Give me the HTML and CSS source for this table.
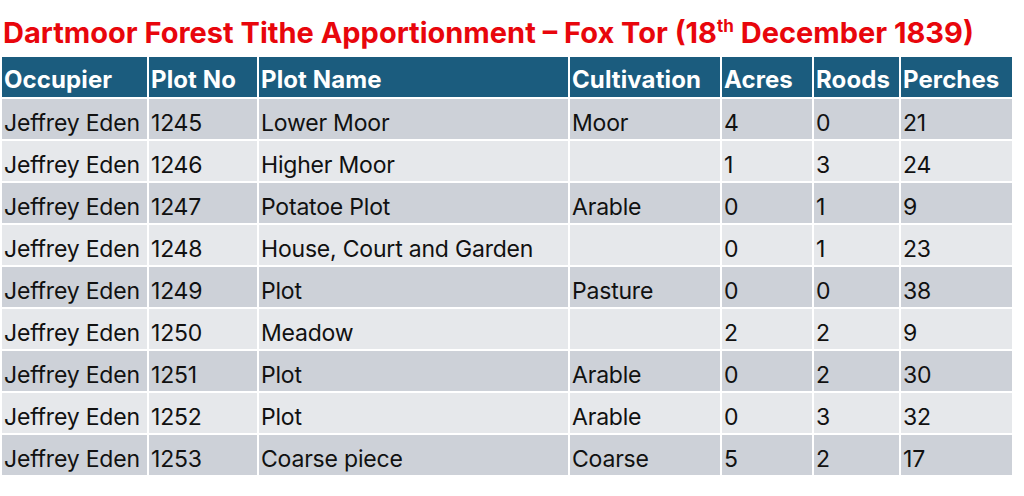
FILE: index.html
```html
<!DOCTYPE html>
<html>
<head>
<meta charset="utf-8">
<link rel="stylesheet" href="styles.css">
</head>
<body>
<h1 class="title">Dartmoor Forest Tithe Apportionment – Fox Tor (18<sup>th</sup> December 1839)</h1>
<table class="tithe">
<colgroup>
<col class="c1"><col class="c2"><col class="c3"><col class="c4"><col class="c5"><col class="c6"><col class="c7">
</colgroup>
<thead>
<tr><th>Occupier</th><th>Plot No</th><th>Plot Name</th><th>Cultivation</th><th>Acres</th><th>Roods</th><th>Perches</th></tr>
</thead>
<tbody>
<tr><td>Jeffrey Eden</td><td>1245</td><td>Lower Moor</td><td>Moor</td><td>4</td><td>0</td><td>21</td></tr>
<tr><td>Jeffrey Eden</td><td>1246</td><td>Higher Moor</td><td></td><td>1</td><td>3</td><td>24</td></tr>
<tr><td>Jeffrey Eden</td><td>1247</td><td>Potatoe Plot</td><td>Arable</td><td>0</td><td>1</td><td>9</td></tr>
<tr><td>Jeffrey Eden</td><td>1248</td><td>House, Court and Garden</td><td></td><td>0</td><td>1</td><td>23</td></tr>
<tr><td>Jeffrey Eden</td><td>1249</td><td>Plot</td><td>Pasture</td><td>0</td><td>0</td><td>38</td></tr>
<tr><td>Jeffrey Eden</td><td>1250</td><td>Meadow</td><td></td><td>2</td><td>2</td><td>9</td></tr>
<tr><td>Jeffrey Eden</td><td>1251</td><td>Plot</td><td>Arable</td><td>0</td><td>2</td><td>30</td></tr>
<tr><td>Jeffrey Eden</td><td>1252</td><td>Plot</td><td>Arable</td><td>0</td><td>3</td><td>32</td></tr>
<tr><td>Jeffrey Eden</td><td>1253</td><td>Coarse piece</td><td>Coarse</td><td>5</td><td>2</td><td>17</td></tr>
</tbody>
</table>
</body>
</html>
```
FILE: styles.css
```css
html, body {
  margin: 0;
  padding: 0;
  background: #ffffff;
}
body {
  font-family: Inter, "Liberation Sans", sans-serif;
}
.title {
  margin: 0;
  padding: 16px 0 0 3px;
  height: 38px;
  font-size: 29px;
  font-weight: 700;
  color: #e8060c;
  line-height: 34px;
  letter-spacing: 0;
  white-space: nowrap;
}
.title sup {
  font-size: 17px;
  line-height: 0;
  vertical-align: 11px;
}
.tithe {
  border-collapse: separate;
  border-spacing: 2px;
  table-layout: fixed;
  width: 1014px;
  margin-top: 1px;
}
.c1 { width: 145px; }
.c2 { width: 108px; }
.c3 { width: 309px; }
.c4 { width: 150px; }
.c5 { width: 90px; }
.c6 { width: 85px; }
.c7 { width: 111px; }
.tithe th, .tithe td {
  height: 33px;
  padding: 7px 0 0 2px;
  vertical-align: middle;
  text-align: left;
  white-space: nowrap;
  overflow: hidden;
  line-height: 28px;
}
.tithe th {
  background: #1b5c7e;
  color: #ffffff;
  font-weight: 700;
  font-size: 24px;
  letter-spacing: 0.1px;
  padding-top: 6px;
  height: 34px;
}
.tithe td {
  color: #111111;
  font-weight: 400;
  font-size: 23px;
  letter-spacing: -0.2px;
}
.tithe tbody tr:nth-child(odd) td { background: #cdd1d8; }
.tithe tbody tr:nth-child(even) td { background: #e6e8eb; }
.tithe tbody tr:nth-child(n+5) td { padding-top: 8px; height: 32px; }
```
